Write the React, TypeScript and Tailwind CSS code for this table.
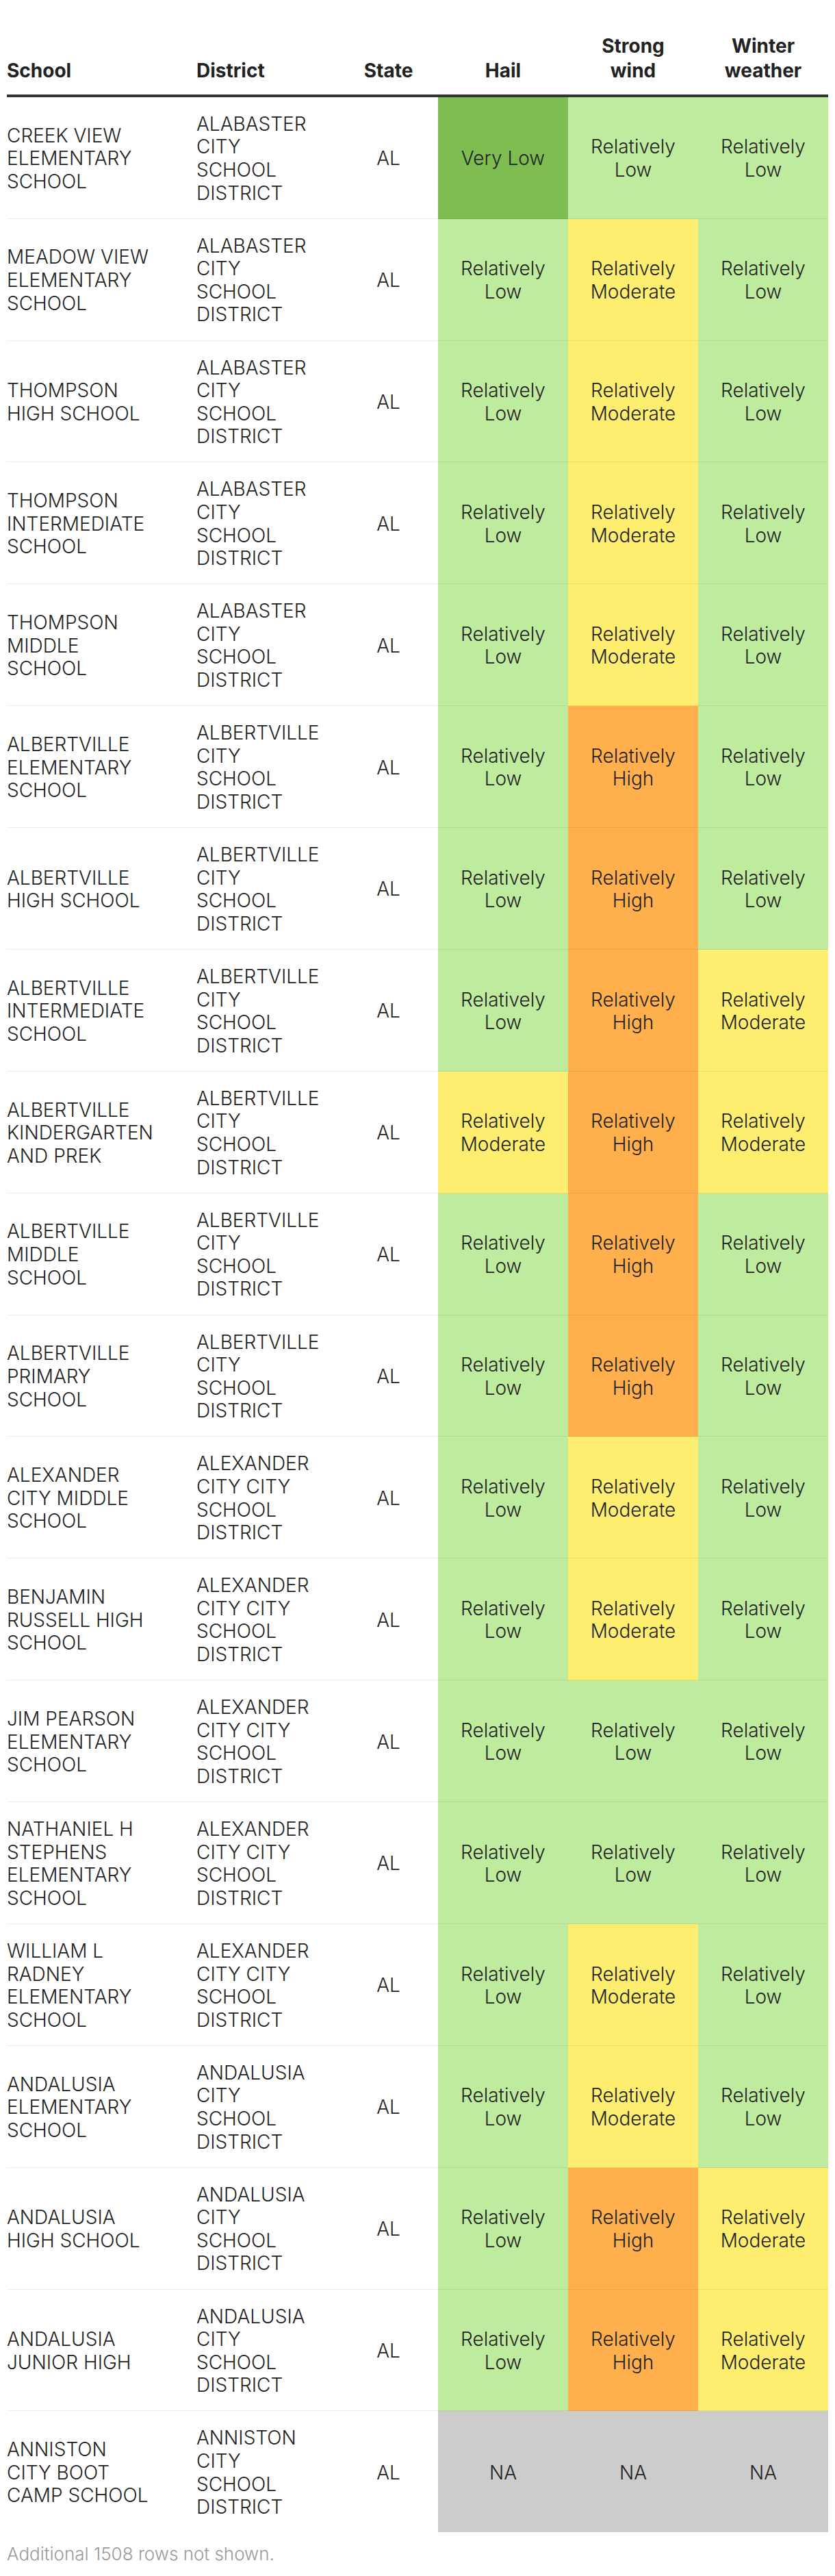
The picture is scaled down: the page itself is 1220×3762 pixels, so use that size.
type Level = "VL" | "RL" | "RM" | "RH" | "NA"

interface Row {
  school: string[]
  district: string[]
  state: string
  hail: Level
  wind: Level
  winter: Level
}

const ALABASTER = ["ALABASTER", "CITY", "SCHOOL", "DISTRICT"]
const ALBERTVILLE = ["ALBERTVILLE", "CITY", "SCHOOL", "DISTRICT"]
const ALEXANDER = ["ALEXANDER", "CITY CITY", "SCHOOL", "DISTRICT"]
const ANDALUSIA = ["ANDALUSIA", "CITY", "SCHOOL", "DISTRICT"]
const ANNISTON = ["ANNISTON", "CITY", "SCHOOL", "DISTRICT"]

const rows: Row[] = [
  { school: ["CREEK VIEW", "ELEMENTARY", "SCHOOL"], district: ALABASTER, state: "AL", hail: "VL", wind: "RL", winter: "RL" },
  { school: ["MEADOW VIEW", "ELEMENTARY", "SCHOOL"], district: ALABASTER, state: "AL", hail: "RL", wind: "RM", winter: "RL" },
  { school: ["THOMPSON", "HIGH SCHOOL"], district: ALABASTER, state: "AL", hail: "RL", wind: "RM", winter: "RL" },
  { school: ["THOMPSON", "INTERMEDIATE", "SCHOOL"], district: ALABASTER, state: "AL", hail: "RL", wind: "RM", winter: "RL" },
  { school: ["THOMPSON", "MIDDLE", "SCHOOL"], district: ALABASTER, state: "AL", hail: "RL", wind: "RM", winter: "RL" },
  { school: ["ALBERTVILLE", "ELEMENTARY", "SCHOOL"], district: ALBERTVILLE, state: "AL", hail: "RL", wind: "RH", winter: "RL" },
  { school: ["ALBERTVILLE", "HIGH SCHOOL"], district: ALBERTVILLE, state: "AL", hail: "RL", wind: "RH", winter: "RL" },
  { school: ["ALBERTVILLE", "INTERMEDIATE", "SCHOOL"], district: ALBERTVILLE, state: "AL", hail: "RL", wind: "RH", winter: "RM" },
  { school: ["ALBERTVILLE", "KINDERGARTEN", "AND PREK"], district: ALBERTVILLE, state: "AL", hail: "RM", wind: "RH", winter: "RM" },
  { school: ["ALBERTVILLE", "MIDDLE", "SCHOOL"], district: ALBERTVILLE, state: "AL", hail: "RL", wind: "RH", winter: "RL" },
  { school: ["ALBERTVILLE", "PRIMARY", "SCHOOL"], district: ALBERTVILLE, state: "AL", hail: "RL", wind: "RH", winter: "RL" },
  { school: ["ALEXANDER", "CITY MIDDLE", "SCHOOL"], district: ALEXANDER, state: "AL", hail: "RL", wind: "RM", winter: "RL" },
  { school: ["BENJAMIN", "RUSSELL HIGH", "SCHOOL"], district: ALEXANDER, state: "AL", hail: "RL", wind: "RM", winter: "RL" },
  { school: ["JIM PEARSON", "ELEMENTARY", "SCHOOL"], district: ALEXANDER, state: "AL", hail: "RL", wind: "RL", winter: "RL" },
  { school: ["NATHANIEL H", "STEPHENS", "ELEMENTARY", "SCHOOL"], district: ALEXANDER, state: "AL", hail: "RL", wind: "RL", winter: "RL" },
  { school: ["WILLIAM L", "RADNEY", "ELEMENTARY", "SCHOOL"], district: ALEXANDER, state: "AL", hail: "RL", wind: "RM", winter: "RL" },
  { school: ["ANDALUSIA", "ELEMENTARY", "SCHOOL"], district: ANDALUSIA, state: "AL", hail: "RL", wind: "RM", winter: "RL" },
  { school: ["ANDALUSIA", "HIGH SCHOOL"], district: ANDALUSIA, state: "AL", hail: "RL", wind: "RH", winter: "RM" },
  { school: ["ANDALUSIA", "JUNIOR HIGH"], district: ANDALUSIA, state: "AL", hail: "RL", wind: "RH", winter: "RM" },
  { school: ["ANNISTON", "CITY BOOT", "CAMP SCHOOL"], district: ANNISTON, state: "AL", hail: "NA", wind: "NA", winter: "NA" },
]

const levels: Record<Level, { bg: string; lines: string[] }> = {
  VL: { bg: "bg-[#7ebd52]", lines: ["Very Low"] },
  RL: { bg: "bg-[#bfeb9f]", lines: ["Relatively", "Low"] },
  RM: { bg: "bg-[#feee70]", lines: ["Relatively", "Moderate"] },
  RH: { bg: "bg-[#ffb04d]", lines: ["Relatively", "High"] },
  NA: { bg: "bg-[#cccccc]", lines: ["NA"] },
}

function Lines({ lines }: { lines: string[] }) {
  return (
    <>
      {lines.map((l, i) => (
        <span key={i} className="block whitespace-nowrap">
          {l}
        </span>
      ))}
    </>
  )
}

function RiskCell({ level, last }: { level: Level; last: boolean }) {
  const lv = levels[level]
  return (
    <td className={`${lv.bg} text-center align-middle pt-[23px] pb-[19.5px] ${last ? "" : "border-b border-black/[0.07]"}`}>
      <Lines lines={lv.lines} />
    </td>
  )
}

export default function App() {
  return (
    <div className="bg-white min-h-screen px-[10px] pt-[49px] font-['Inter',sans-serif] text-[#222222]">
      <table className="w-[1200px] table-fixed border-separate border-spacing-0">
        <colgroup>
          <col className="w-[277px]" />
          <col className="w-[208px]" />
          <col className="w-[145px]" />
          <col className="w-[190px]" />
          <col className="w-[190px]" />
          <col className="w-[190px]" />
        </colgroup>
        <thead>
          <tr className="text-[28px] leading-[1.3] font-semibold">
            <th className="text-left align-bottom pb-[16px] border-b-4 border-[#333333]">School</th>
            <th className="text-left align-bottom pb-[16px] border-b-4 border-[#333333]">District</th>
            <th className="text-center align-bottom pb-[16px] border-b-4 border-[#333333]">State</th>
            <th className="text-center align-bottom pb-[16px] border-b-4 border-[#333333]">Hail</th>
            <th className="text-center align-bottom pb-[16px] border-b-4 border-[#333333]">
              <Lines lines={["Strong", "wind"]} />
            </th>
            <th className="text-center align-bottom pb-[16px] border-b-4 border-[#333333]">
              <Lines lines={["Winter", "weather"]} />
            </th>
          </tr>
        </thead>
        <tbody>
          {rows.map((r, i) => {
            const last = i === rows.length - 1
            const line = last ? "" : "border-b border-black/[0.07]"
            return (
              <tr key={i} className="text-[28px] leading-[1.2] font-light">
                <td className={`text-left align-middle pt-[23px] pb-[19.5px] ${line}`}>
                  <Lines lines={r.school} />
                </td>
                <td className={`text-left align-middle pt-[23px] pb-[19.5px] ${line}`}>
                  <Lines lines={r.district} />
                </td>
                <td className={`text-center align-middle pt-[23px] pb-[19.5px] ${line}`}>{r.state}</td>
                <RiskCell level={r.hail} last={last} />
                <RiskCell level={r.wind} last={last} />
                <RiskCell level={r.winter} last={last} />
              </tr>
            )
          })}
        </tbody>
      </table>
      <p className="mt-[18px] text-[26px] leading-[28px] font-light text-[#9a9a9a]">Additional 1508 rows not shown.</p>
    </div>
  )
}
